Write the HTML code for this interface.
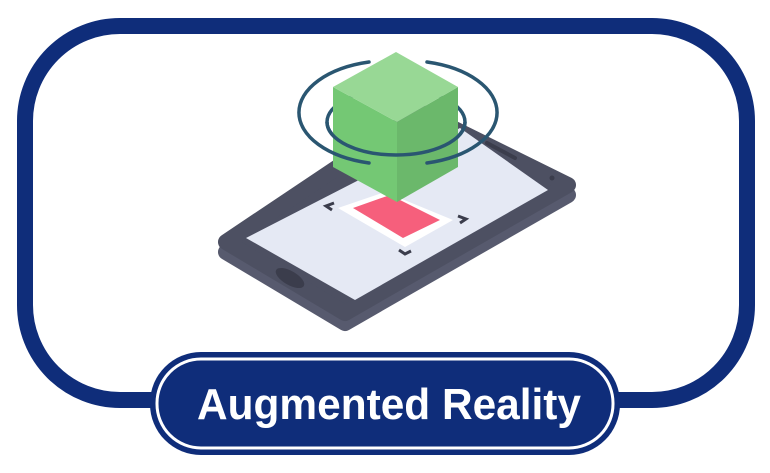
<!DOCTYPE html>
<html><head><style>
html,body{margin:0;padding:0;background:#fff;}
svg{display:block}
</style></head><body>
<svg width="770" height="473" viewBox="0 0 770 473" xmlns="http://www.w3.org/2000/svg">
<rect x="25" y="26" width="722" height="374" rx="95" ry="95" fill="none" stroke="#0f2d7a" stroke-width="16"/>
<!-- phone -->
<polygon points="226,252 420,122 568,195 345,323" fill="#575a6e" stroke="#575a6e" stroke-width="16" stroke-linejoin="round"/>
<polygon points="226,242 420,112 568,185 345,313" fill="#4d5062" stroke="#4d5062" stroke-width="16" stroke-linejoin="round"/>
<polygon points="246,238 460,128 548,190 355,300" fill="#e5e9f4"/>
<ellipse cx="290" cy="278" rx="16" ry="7" transform="rotate(30 290 278)" fill="#3b3d4c"/>
<line x1="487" y1="143" x2="515" y2="158" stroke="#3b3d4c" stroke-width="4" stroke-linecap="round"/>
<circle cx="552" cy="178" r="2.5" fill="#3b3d4c"/>
<!-- marker -->
<polygon points="338,208 385,192 453,220 405,247" fill="#fff"/>
<polygon points="353,208 390,195 440,220 403,238" fill="#f65f7c"/>
<path d="M334,203 l-8,3 l6,4" fill="none" stroke="#3b3d4c" stroke-width="3"/>
<path d="M458,216 l8,3 l-6,4" fill="none" stroke="#3b3d4c" stroke-width="3"/>
<path d="M399,250 l6,4 l6,-3" fill="none" stroke="#3b3d4c" stroke-width="3"/>
<!-- inner ring back -->
<ellipse cx="396" cy="122" rx="69" ry="33" fill="none" stroke="#2a5671" stroke-width="3.5"/>
<!-- cube -->
<polygon points="333,87 397,122 397,202 333,167" fill="#74c874"/>
<polygon points="458,87 397,122 397,202 458,167" fill="#6bb86b"/>
<polygon points="396,52 458,87 397,122 333,87" fill="#98d895"/>
<!-- inner ring front -->
<path d="M327,122 A69,33 0 0 0 465,122" fill="none" stroke="#2a5671" stroke-width="3.5"/>
<!-- outer ring -->
<path d="M369,62 A92,52 0 0 0 369,163" fill="none" stroke="#2a5671" stroke-width="3.5" stroke-linecap="round"/>
<path d="M427,62 A92,52 0 0 1 427,163" fill="none" stroke="#2a5671" stroke-width="3.5" stroke-linecap="round"/>
<!-- pill -->
<rect x="150" y="352" width="470" height="103" rx="51" fill="#0f2d7a"/>
<rect x="157" y="359" width="456" height="89" rx="44" fill="none" stroke="#fff" stroke-width="3"/>
<text x="197" y="419" textLength="384" lengthAdjust="spacingAndGlyphs" font-family="Liberation Sans, sans-serif" font-weight="bold" font-size="44" fill="#fff">Augmented Reality</text>
</svg>
</body></html>
